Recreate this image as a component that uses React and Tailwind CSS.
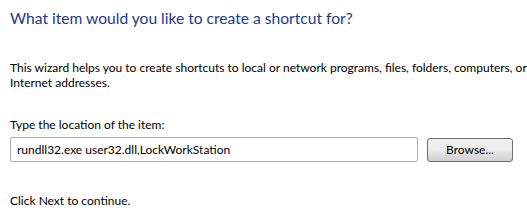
export default function App() {
  return (
    <div className="w-[527px] h-[220px] bg-white overflow-hidden" style={{ fontFamily: 'Lato, "Open Sans", sans-serif' }}>
      <div className="pl-[10px] pt-[7px]">
        <h1 className="text-[15.6px] leading-[22px] text-[#1b3a8e] font-normal whitespace-nowrap">What item would you like to create a shortcut for?</h1>
        <p className="mt-[31px] text-[12px] leading-[15px] text-black whitespace-nowrap">
          This wizard helps you to create shortcuts to local or network programs, files, folders, computers, or
          <br />
          Internet addresses.
        </p>
        <div className="mt-[27px] text-[12px] leading-[15px] text-black">Type the location of the item:</div>
        <div className="mt-[5px] flex items-center gap-[9px]">
          <div className="w-[408px] h-[25px] border border-[#abadb3] rounded-[2px] flex items-center px-[6px] text-[12px] text-black whitespace-nowrap">
            rundll32.exe user32.dll,LockWorkStation
          </div>
          <div className="w-[86px] h-[24px] border border-[#707070] rounded-[3px] bg-gradient-to-b from-[#f2f2f2] via-[#ebebeb] to-[#cfcfcf] flex items-center justify-center text-[12px] text-black">
            Browse...
          </div>
        </div>
        <div className="mt-[31px] text-[12px] leading-[15px] text-black">Click Next to continue.</div>
      </div>
    </div>
  );
}
